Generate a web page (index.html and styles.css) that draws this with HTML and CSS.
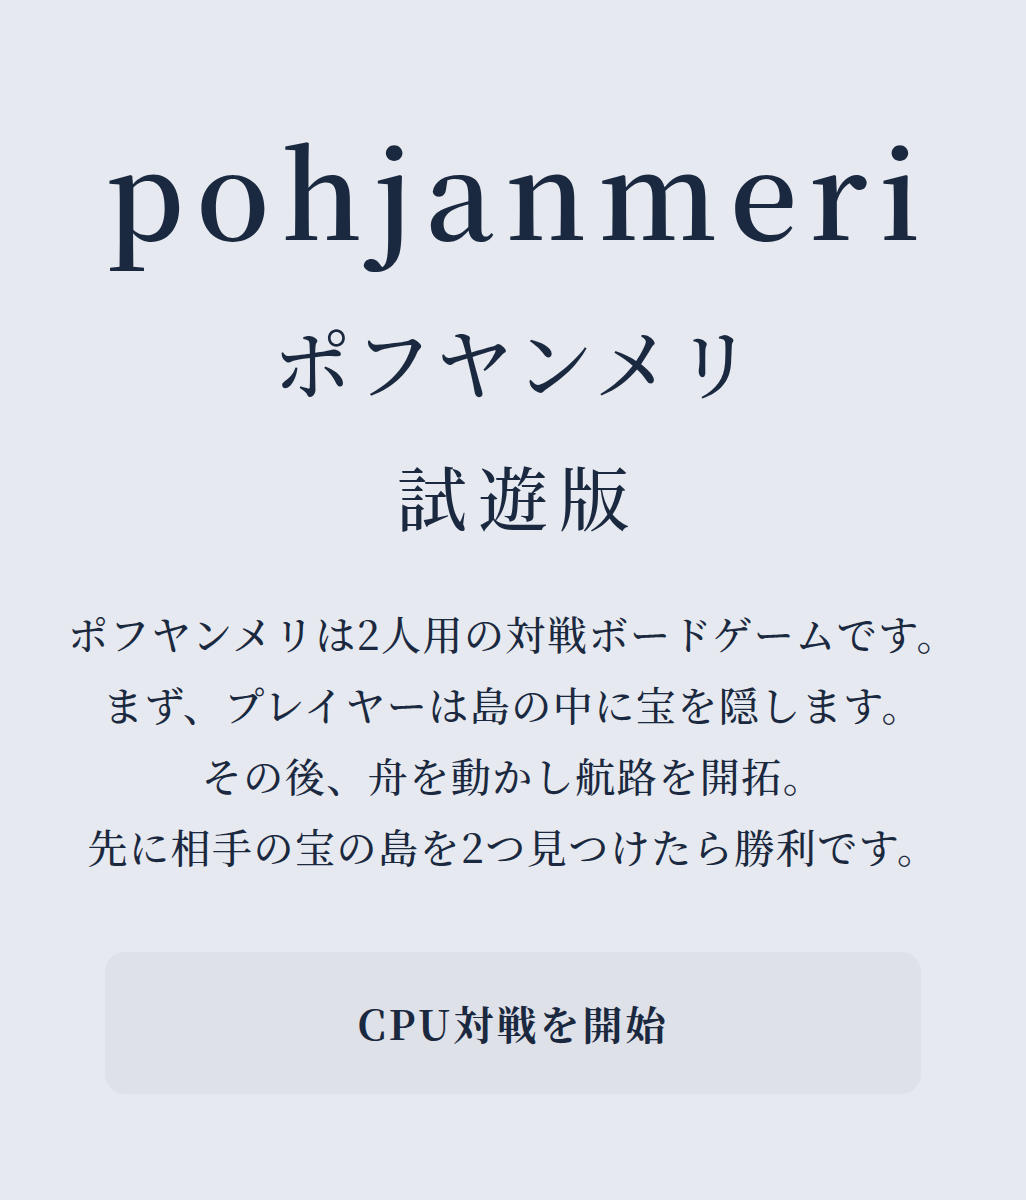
FILE: index.html
```html
<!DOCTYPE html>
<html lang="ja">
<head>
    <meta charset="UTF-8">
    <meta name="viewport" content="width=device-width, initial-scale=1.0">
    <title>pohjanmeri 試遊版</title>
    <link rel="stylesheet" href="styles.css">
</head>
<body>
    <main id="title-screen">
        <h1 class="logo">pohjanmeri</h1>
        <div class="logo-kana">ポフヤンメリ</div>
        <div class="edition">試遊版</div>
        <p class="intro">
            ポフヤンメリは2人用の対戦ボードゲームです。<br>
            まず、プレイヤーは島の中に宝を隠します。<br>
            その後、舟を動かし航路を開拓。<br>
            先に相手の宝の島を2つ見つけたら勝利です。
        </p>
        <button class="start-button" type="button">CPU対戦を開始</button>
    </main>
</body>
</html>
```

FILE: styles.css
```css
html, body {
    margin: 0;
    padding: 0;
}
body {
    background-color: #e6e9ef;
    color: #1b2940;
    font-family: "Noto Serif CJK JP", "Liberation Serif", "Noto Sans CJK JP", serif;
}
#title-screen {
    display: flex;
    flex-direction: column;
    align-items: center;
    padding: 116px 40px 0;
    text-align: center;
}
/* 見出し: ロゴ、カナ表記、試遊版 */
.logo {
    margin: 0;
    font-size: 120px;
    font-weight: 600;
    line-height: 1.2;
    letter-spacing: 12px;
    text-indent: 12px;
}
.logo-kana {
    margin-top: 54px;
    font-size: 78px;
    font-weight: 500;
    line-height: 1.2;
    letter-spacing: 3px;
    text-indent: 3px;
}
.edition {
    margin-top: 46px;
    font-size: 70px;
    font-weight: 500;
    line-height: 1.2;
    letter-spacing: 11px;
    text-indent: 11px;
}
.intro {
    margin: 59px 0 0;
    font-size: 40px;
    font-weight: 500;
    line-height: 71px;
    letter-spacing: 1.5px;
}
.start-button {
    align-self: stretch;
    margin: 71px 65px 0;
    height: 142px;
    border: none;
    border-radius: 20px;
    background-color: #dee1e7;
    color: #1b2940;
    font-family: inherit;
    font-size: 40px;
    font-weight: bold;
    letter-spacing: 3px;
    cursor: pointer;
}
```
